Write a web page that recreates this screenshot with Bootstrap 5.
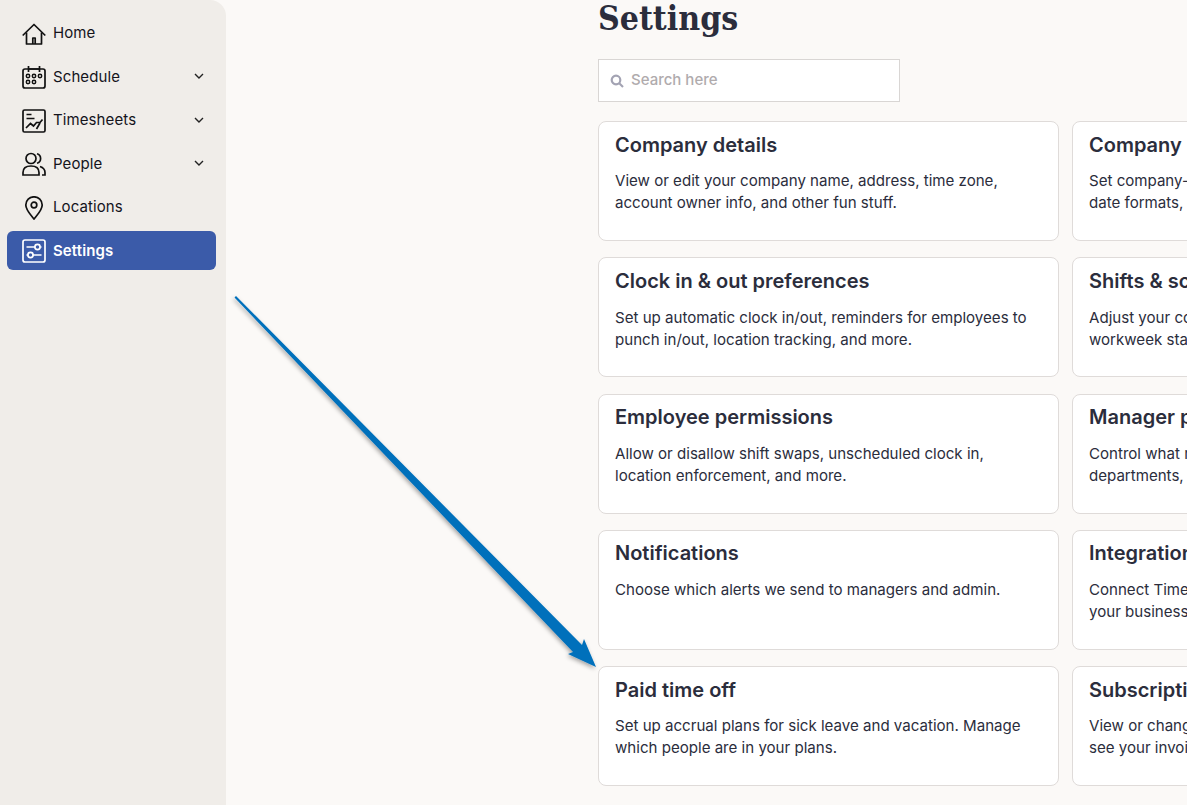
<!DOCTYPE html>
<html lang="en">
<head>
    <meta charset="UTF-8">
    <meta name="viewport" content="width=device-width, initial-scale=1.0">
    <title>Settings</title>
    <link href="https://cdn.jsdelivr.net/npm/bootstrap@5.3.0/dist/css/bootstrap.min.css" rel="stylesheet">
    <style>
        html, body { height: 100%; }
        body {
            background-color: #fbf9f7;
            font-family: Inter, "Liberation Sans", sans-serif;
            color: #2b2d3c;
            overflow: hidden;
        }
        .side-bar {
            width: 226px;
            height: 805px;
            background: #f0ede9;
            border-top-right-radius: 16px;
            padding: 13px 10px 0 7px;
        }
        .side-link {
            height: 39px;
            margin-bottom: 4.5px;
            padding: 2px 12px 0 15px;
            border-radius: 6px;
            color: #14141c;
            font-size: 15px;
            font-weight: 400;
            letter-spacing: .1px;
            text-decoration: none;
        }
        .side-link.on { background: #3b5ba9; color: #fff; font-weight: 600; }
        .side-link svg.ico { width: 24px; height: 24px; margin-right: 7px; flex: none; }
        .side-link svg.chev { width: 10px; height: 10px; margin-left: auto; margin-top: -2px; }
        .main-area { padding-left: 372px; padding-top: 0; }
        .page-title {
            font-family: "DejaVu Serif Condensed", "DejaVu Serif", "Liberation Serif", serif;
            font-stretch: condensed;
            font-size: 33.5px;
            font-weight: 700;
            line-height: 37px;
            margin: 0 0 22px;
            color: #2b2d3c;
        }
        .search-box {
            width: 302px;
            height: 43px;
            background: #fff;
            border: 1px solid #d9d6d4;
            padding-left: 12px;
            margin-bottom: 19px;
            color: #b0abad;
            font-size: 15px;
            font-weight: 500;
        }
        .search-box svg { width: 14px; height: 14px; margin-right: 7px; margin-left: -1px; }
        .card-grid {
            display: grid;
            grid-template-columns: 461px 461px;
            grid-auto-rows: 120px;
            gap: 16.25px 13px;
        }
        .set-card {
            border: 1px solid #dfdbd9;
            border-radius: 8px;
            padding: 9.6px 16px;
            background: #fff;
        }
        .set-card h5 {
            font-size: 20px;
            font-weight: 600;
            line-height: 26px;
            margin: 0 0 12.75px;
            white-space: nowrap;
            color: #2b2d3c;
        }
        .set-card p {
            font-size: 15.08px;
            line-height: 22px;
            margin: 0;
            color: #2b2d3c;
        }
        .arrow-over { position: absolute; left: 0; top: 0; pointer-events: none; }
    </style>
</head>
<body>
    <div class="d-flex">
        <!-- Sidebar -->
        <div class="side-bar flex-shrink-0">
            <nav class="d-flex flex-column">
                <a class="side-link d-flex align-items-center" href="#">
                    <svg class="ico" viewBox="0 0 24 24" fill="none" stroke="#111" stroke-width="1.7" stroke-linejoin="round"><path d="M.7 13.500 12 2.500l11.300 11"/><path d="M4.500 10.500V22h15V10.500"/><path d="M10.800 22v-6h2.400v6"/></svg>
                    Home
                </a>
                <a class="side-link d-flex align-items-center" href="#">
                    <svg class="ico" viewBox="0 0 24 24" fill="none" stroke="#111" stroke-width="1.7"><rect x="1" y="4" width="22" height="19" rx="2"/><path d="M6.500 1v6M17.500 1v6M6.500 4h11"/><g stroke-width="1.5"><circle cx="6" cy="11" r="1.700"/><circle cx="12" cy="11" r="1.700"/><circle cx="18" cy="11" r="1.700"/><circle cx="6" cy="17" r="1.700"/><circle cx="12" cy="17" r="1.700"/></g></svg>
                    Schedule
                    <svg class="chev" viewBox="0 0 10 10" fill="none" stroke="#222" stroke-width="1.4"><path d="M1 3l4 4 4-4"/></svg>
                </a>
                <a class="side-link d-flex align-items-center" href="#">
                    <svg class="ico" viewBox="0 0 24 24" fill="none" stroke="#111" stroke-width="1.7"><rect x="1" y="1" width="22" height="22" rx="1.500"/><path d="M4.500 5.500h5M4.500 9.500h8"/><path d="M4 19l4.500-4.500 3 2.500 3-3.500h3.500l2.500-3M18 14l-3.500 6"/></svg>
                    Timesheets
                    <svg class="chev" viewBox="0 0 10 10" fill="none" stroke="#222" stroke-width="1.4"><path d="M1 3l4 4 4-4"/></svg>
                </a>
                <a class="side-link d-flex align-items-center" href="#">
                    <svg class="ico" viewBox="0 0 24 24" fill="none" stroke="#111" stroke-width="1.7"><circle cx="9" cy="6.500" r="5"/><path d="M1 23v-2.500C1 16.500 4 14 9 14s8 2.500 8 6.500V23z"/><path d="M15 1.700a5 5 0 0 1 0 9.600M18 14.500c3 1 5 3 5 6V23h-3"/></svg>
                    People
                    <svg class="chev" viewBox="0 0 10 10" fill="none" stroke="#222" stroke-width="1.4"><path d="M1 3l4 4 4-4"/></svg>
                </a>
                <a class="side-link d-flex align-items-center" href="#">
                    <svg class="ico" viewBox="0 0 24 24" fill="none" stroke="#111" stroke-width="1.7"><path d="M12 23C8 18 3.800 14 3.800 9a8.200 8.200 0 0 1 16.400 0c0 5-4.200 9-8.200 14z"/><circle cx="12" cy="9" r="2.800"/></svg>
                    Locations
                </a>
                <a class="side-link on d-flex align-items-center" href="#">
                    <svg class="ico" viewBox="0 0 24 24" fill="none" stroke="#fff" stroke-width="1.7"><rect x="1" y="1" width="22" height="22" rx="2"/><path d="M4.500 8h8.500M18.500 8h1M4.500 16h1M11 16h8.500"/><circle cx="15.500" cy="8" r="2.600"/><circle cx="8.500" cy="16" r="2.600"/></svg>
                    Settings
                </a>
            </nav>
        </div>

        <!-- Main -->
        <div class="main-area flex-shrink-0">
            <h1 class="page-title">Settings</h1>
            <div class="search-box d-flex align-items-center">
                <svg viewBox="0 0 14 14" fill="none" stroke="#a3a3b3" stroke-width="2.200"><circle cx="6" cy="6" r="4.300"/><path d="M9 9l4 4"/></svg>
                Search here
            </div>
            <div class="card-grid">
                <div class="set-card"><h5>Company details</h5><p>View or edit your company name, address, time zone, account owner info, and other fun stuff.</p></div>
                <div class="set-card"><h5>Company settings</h5><p>Set company-wide preferences for language, currency, and date formats, and more.</p></div>
                <div class="set-card"><h5>Clock in &amp; out preferences</h5><p>Set up automatic clock in/out, reminders for employees to punch in/out, location tracking, and more.</p></div>
                <div class="set-card"><h5>Shifts &amp; schedules</h5><p>Adjust your company's shift rules, breaks, and the workweek start, and more.</p></div>
                <div class="set-card"><h5>Employee permissions</h5><p>Allow or disallow shift swaps, unscheduled clock in, location enforcement, and more.</p></div>
                <div class="set-card"><h5>Manager permissions</h5><p>Control what managers can see and do across departments, locations, and more.</p></div>
                <div class="set-card"><h5>Notifications</h5><p>Choose which alerts we send to managers and admin.</p></div>
                <div class="set-card"><h5>Integrations</h5><p>Connect Timesheets with the other tools you use to run your business.</p></div>
                <div class="set-card"><h5>Paid time off</h5><p>Set up accrual plans for sick leave and vacation. Manage which people are in your plans.</p></div>
                <div class="set-card"><h5>Subscription</h5><p>View or change your subscription plan and billing details, see your invoices.</p></div>
            </div>
        </div>
    </div>

    <!-- Annotation arrow over the page -->
    <svg class="arrow-over" width="1187" height="805" viewBox="0 0 1187 805">
        <defs>
            <filter id="arrowShade" x="-10%" y="-10%" width="120%" height="120%">
                <feDropShadow dx="-1" dy="2" stdDeviation="2" flood-color="#000" flood-opacity="0.35"/>
            </filter>
        </defs>
        <polygon filter="url(#arrowShade)" fill="#0170bb" points="234.500,297.500 236,296 582,645 584,639 596,667 568,654 573,652"/>
    </svg>
</body>
</html>
